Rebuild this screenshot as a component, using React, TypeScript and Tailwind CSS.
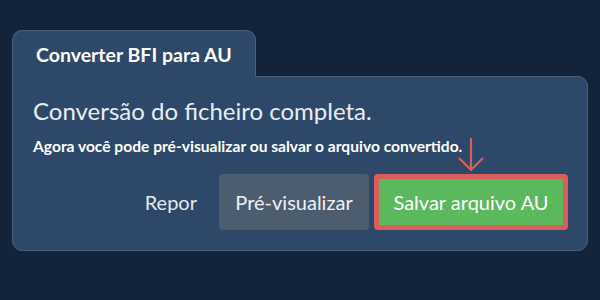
export default function App() {
  return (
    <div
      className="w-[600px] h-[300px] bg-[#12233a] pt-[30px] pl-[12px]"
      style={{ fontFamily: "Lato, 'Noto Sans', sans-serif" }}
    >
      <div className="relative z-10 -mb-px w-[244px] h-[47px] rounded-t-[10px] border border-b-0 border-[#4a6280] bg-[#2d4868] pl-[23px] pt-[12px]">
        <div className="text-[19.5px] font-bold leading-[24px] text-white">Converter BFI para AU</div>
      </div>
      <div className="relative w-[576px] h-[175px] rounded-[10px] rounded-tl-none border border-[#4a6280] bg-[#2d4868] pl-[20px] pr-[19px] pt-[19px]">
        <h1 className="text-[24px] leading-[29px] text-[#e9edf1]">Conversão do ficheiro completa.</h1>
        <p className="mt-[12px] text-[15.6px] font-bold leading-[18px] text-white">
          Agora você pode pré-visualizar ou salvar o arquivo convertido.
        </p>
        <div className="mt-[19px] flex items-center justify-end">
          <button className="mr-[22px] text-[20px] leading-[24px] text-[#e4e8ec]">Repor</button>
          <button className="h-[56px] w-[150px] rounded-[4px] bg-[#4c5d6f] text-[20px] text-[#eef1f4]">Pré-visualizar</button>
          <button className="ml-[5px] h-[56px] w-[194px] rounded-[4px] border-[5px] border-[#d9605a] bg-[#5cb85c] text-[20px] text-white">
            Salvar arquivo AU
          </button>
        </div>
        <svg className="absolute left-[444px] top-[60px]" width="30" height="36" viewBox="0 0 30 36" fill="none">
          <path d="M14 1 V33 M2 21 L14 33 L26 21" stroke="#d9605a" strokeWidth="2.2" />
        </svg>
      </div>
    </div>
  );
}
